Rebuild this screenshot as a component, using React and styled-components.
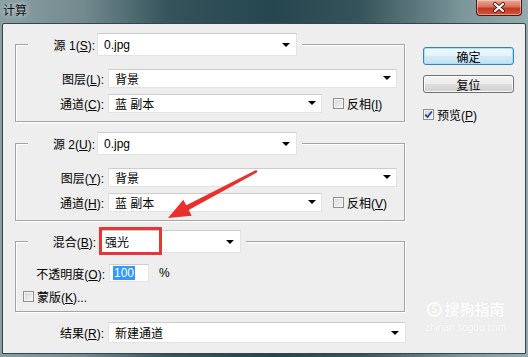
import React from 'react';
import styled, { createGlobalStyle, css } from 'styled-components';

const GlobalStyle = createGlobalStyle`
  html, body { margin: 0; padding: 0; }
  body {
    width: 528px; height: 357px; overflow: hidden;
    font-family: "Liberation Sans", "Noto Sans CJK SC", sans-serif;
    font-size: 12px; color: #000;
  }
  u { text-underline-offset: 1px; }
`;

const Window = styled.div`
  position: relative;
  width: 528px; height: 357px;
  box-sizing: border-box;
  padding: 0 2px 3px 2px;
  display: flex; flex-direction: column;
  background: linear-gradient(90deg, #8a9fa3 0%, #72898e 16%, #34535b 32%, #26464f 52%, #35535a 68%, #7d979b 88%, #95abae 100%);
`;

const TitleBar = styled.div`
  height: 23px; flex: none;
  display: flex; align-items: flex-start;
`;

const TitleText = styled.span`
  margin: 3px 0 0 1px;
  font-family: "Noto Sans CJK SC", sans-serif;
  font-size: 12px; line-height: 14px; color: #111;
  text-shadow: 0 0 4px #c9d4d6, 0 0 8px #c9d4d6;
`;

const CloseButton = styled.div`
  margin-left: auto; margin-right: 4px;
  width: 46px; height: 16px; box-sizing: border-box;
  border: 1px solid #4a1a14; border-top: none;
  border-radius: 0 0 4px 4px;
  background: linear-gradient(#e9a99b 0%, #d8715d 45%, #c2391f 55%, #d1533a 100%);
  box-shadow: inset 0 0 0 1px rgba(255,220,210,0.5);
  display: flex; align-items: center; justify-content: center;
`;

const Client = styled.div`
  position: relative;
  flex: 1;
  border: 1px solid #34464b;
  border-radius: 2px 2px 0 0;
  background: #eeeeee;
  display: flex;
  padding: 9px 11px 0 12px;
`;

const LeftCol = styled.div`
  width: 391px; flex: none;
  display: flex; flex-direction: column;
`;

const RightCol = styled.div`
  width: 91px; flex: none;
  margin-left: 17px;
  padding-top: 14px;
  display: flex; flex-direction: column;
`;

const Group = styled.fieldset`
  margin: ${p => p.$mt || 0}px 0 0 0;
  width: 390px; box-sizing: border-box; min-width: 0;
  padding: ${p => p.$pt ?? 13}px 7px ${p => p.$pb}px 7px;
  border: 1px solid #a3a3a3;
  box-shadow: inset 1px 1px 0 #fff, 1px 1px 0 #fff;
`;

const Legend = styled.legend`
  margin-left: 5px;
  padding: 0 5px 0 0;
  background: #eeeeee;
`;

const LegendRow = styled.div`
  display: flex; align-items: center;
  height: 23px; gap: 2px;
`;

const LegendLabel = styled.span`
  width: ${p => p.$w}px; flex: none;
  text-align: right; white-space: nowrap;
`;

const Rows = styled.div`
  display: flex; flex-direction: column;
  gap: ${p => p.$gap ?? 7}px;
`;

const Row = styled.div`
  display: flex; align-items: center;
  height: ${p => p.$h || 18}px;
  margin-top: ${p => p.$mt || 0}px;
`;

const Label = styled.span`
  width: ${p => p.$w || 81}px; flex: none;
  margin-right: 4px;
  text-align: right; white-space: nowrap;
`;

const Select = styled.div`
  position: relative;
  box-sizing: border-box;
  ${p => p.$w ? css`width: ${p.$w}px; flex: none;` : css`flex: 1;`}
  height: ${p => p.$h}px;
  background: #fff;
  border: 1px solid #e3e3e3;
  border-top-color: #cdcdcd;
  padding-left: 6px;
  display: flex; align-items: center;
  white-space: nowrap;
  &::after {
    content: '';
    position: absolute;
    right: ${p => p.$ar ?? 5}px; top: 50%; margin-top: -2px;
    border-left: 4px solid transparent;
    border-right: 4px solid transparent;
    border-top: 4px solid #000;
  }
`;

const Highlight = styled.span`
  position: absolute;
  left: 0; top: -4px;
  width: 63px; height: 28px;
  box-sizing: border-box;
  border: 3px solid #e2383a;
  pointer-events: none;
`;

const Box = styled.span`
  width: 11px; height: 11px; flex: none;
  box-sizing: border-box;
  border: 1px solid #8e8f8f;
  background: ${p => p.$checked
    ? 'linear-gradient(135deg, #c9d3e6 0%, #eef2f8 100%)'
    : 'linear-gradient(135deg, #d6d6d6 0%, #f6f6f6 100%)'};
  box-shadow: inset 0 0 0 1px #f4f4f4;
  display: flex; align-items: center; justify-content: center;
`;

const Check = styled.label`
  display: flex; align-items: center;
  gap: 3px; white-space: nowrap;
  margin-left: ${p => p.$ml || 0}px;
`;

const Input = styled.div`
  width: 40px; height: 18px; flex: none;
  box-sizing: border-box;
  background: #fff;
  border: 1px solid #e3e3e3;
  border-top-color: #cdcdcd;
  padding-left: 3px;
  display: flex; align-items: center;
`;

const SelectedText = styled.span`
  background: #3399ff; color: #fff;
  padding: 0 1px; line-height: 14px;
`;

const Unit = styled.span`
  margin-left: 10px;
`;

const Button = styled.div`
  height: 18px; box-sizing: border-box;
  margin-bottom: ${p => p.$mb || 0}px;
  border: 1px solid #707070;
  border-radius: 3px;
  background: linear-gradient(#f4f4f4 0%, #ececec 48%, #dddddd 52%, #d0d0d0 100%);
  box-shadow: inset 0 0 0 1px #fcfcfc;
  display: flex; align-items: center; justify-content: center;
  font-family: "Noto Sans CJK SC", sans-serif;
  ${p => p.$default && css`
    border-color: #3c7fb1;
    box-shadow: inset 0 0 0 1px #9fe3fb;
    background: linear-gradient(#f1f8fc 0%, #e5f2fa 48%, #d3e9f7 52%, #c4e0f3 100%);
  `}
`;

const Watermark = styled.div`
  position: absolute;
  left: 422px; top: 276px;
  display: flex; flex-direction: column; align-items: center;
  color: rgba(255, 255, 255, 0.85);
  text-shadow: 0 0 1px rgba(215, 215, 215, 0.35);
  pointer-events: none;
`;

const WmTop = styled.div`
  display: flex; align-items: center; gap: 3px;
  font-family: "Noto Sans CJK SC", sans-serif;
  font-size: 15px; font-weight: 700; line-height: 18px;
`;

const WmLogo = styled.span`
  width: 15px; height: 15px; border-radius: 50%;
  border: 2px solid rgba(255,255,255,0.85);
  box-sizing: border-box;
  display: flex; align-items: center; justify-content: center;
  font-size: 10px; line-height: 1;
`;

const WmBottom = styled.div`
  font-size: 10px; line-height: 12px; margin-top: 4px;
`;

const Arrow = styled.svg`
  position: absolute; left: 0; top: 0;
  pointer-events: none;
`;

function CheckBox({ checked, children, ml }) {
  return (
    <Check $ml={ml}>
      <Box $checked={checked}>
        {checked && (
          <svg width="9" height="9" viewBox="0 0 9 9">
            <path d="M1.2 4.6 L3.6 7 L7.8 1.6" fill="none" stroke="#2b3f8c" strokeWidth="1.7" />
          </svg>
        )}
      </Box>
      <span>{children}</span>
    </Check>
  );
}

function SourceGroup({ n, acc, layerAcc, chanAcc, invAcc, mt }) {
  return (
    <Group $mt={mt} $pb={9}>
      <Legend>
        <LegendRow>
          <LegendLabel $w={67}>源 {n}(<u>{acc}</u>):</LegendLabel>
          <Select $w={200} $h={23} $ar={6}>0.jpg</Select>
        </LegendRow>
      </Legend>
      <Rows>
        <Row>
          <Label>图层(<u>{layerAcc}</u>):</Label>
          <Select $h={19}>背景</Select>
        </Row>
        <Row>
          <Label>通道(<u>{chanAcc}</u>):</Label>
          <Select $w={214} $h={19}>蓝 副本</Select>
          <CheckBox ml={11}>反相(<u>{invAcc}</u>)</CheckBox>
        </Row>
      </Rows>
    </Group>
  );
}

export default function App() {
  return (
    <>
      <GlobalStyle />
      <Window>
        <TitleBar>
          <TitleText>计算</TitleText>
          <CloseButton>
            <svg width="14" height="11" viewBox="0 0 14 11">
              <path d="M3 2 L11 9 M11 2 L3 9" stroke="#5a1a12" strokeWidth="4" strokeLinecap="round" />
              <path d="M3 2 L11 9 M11 2 L3 9" stroke="#fff" strokeWidth="2.2" strokeLinecap="round" />
            </svg>
          </CloseButton>
        </TitleBar>
        <Client>
          <LeftCol>
            <SourceGroup n={1} acc="S" layerAcc="L" chanAcc="C" invAcc="I" />
            <SourceGroup n={2} acc="U" layerAcc="Y" chanAcc="H" invAcc="V" mt={10} />
            <Group $mt={9} $pt={11} $pb={8}>
              <Legend>
                <LegendRow>
                  <LegendLabel $w={68}>混合(<u>B</u>):</LegendLabel>
                  <Select $w={143} $h={23} $ar={6}>
                    强光
                    <Highlight />
                  </Select>
                </LegendRow>
              </Legend>
              <Rows>
                <Row>
                  <Label $w={82}>不透明度(<u>O</u>):</Label>
                  <Input><SelectedText>100</SelectedText></Input>
                  <Unit>%</Unit>
                </Row>
                <Row $h={14}>
                  <CheckBox>蒙版(<u>K</u>)...</CheckBox>
                </Row>
              </Rows>
            </Group>
            <Row $h={21} $mt={10}>
              <Label $w={89}>结果(<u>R</u>):</Label>
              <Select $h={21} $ar={6}>新建通道</Select>
            </Row>
          </LeftCol>
          <RightCol>
            <Button $default $mb={10}>确定</Button>
            <Button $mb={13}>复位</Button>
            <CheckBox checked>预览(<u>P</u>)</CheckBox>
          </RightCol>
          <Watermark>
            <WmTop><WmLogo>S</WmLogo>搜狗指南</WmTop>
            <WmBottom>zhinan.sogou.com</WmBottom>
          </Watermark>
        </Client>
        <Arrow width="528" height="357" viewBox="0 0 528 357">
          <polygon
            points="256.4,169.9 186.3,205.3 183.3,199.7 168,218 191.7,215.7 188.7,210.1 257.6,172.1"
            fill="#e8302c"
          />
        </Arrow>
      </Window>
    </>
  );
}
